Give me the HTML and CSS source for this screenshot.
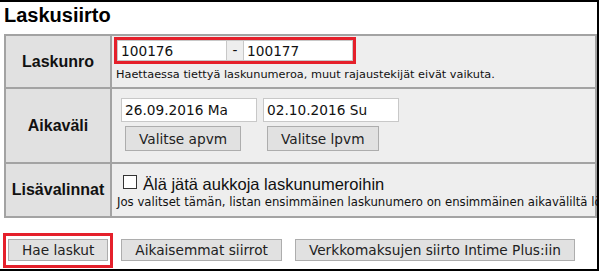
FILE: index.html
```html
<!DOCTYPE html>
<html lang="fi">
<head>
    <meta charset="UTF-8">
    <title>Laskusiirto</title>
    <link rel="stylesheet" href="styles.css">
</head>
<body>
    <div class="frame">
        <h1 class="page-title">Laskusiirto</h1>

        <table class="search-table">
            <tr class="row-short">
                <th>Laskunro</th>
                <td class="cell-range">
                    <div class="range-box">
                        <input class="num-input" type="text" value="100176">
                        <span class="range-sep">-</span>
                        <input class="num-input" type="text" value="100177">
                    </div>
                    <div class="hint">Haettaessa tiettyä laskunumeroa, muut rajaustekijät eivät vaikuta.</div>
                </td>
            </tr>
            <tr class="row-tall">
                <th>Aikaväli</th>
                <td class="cell-dates">
                    <div class="date-row">
                        <div class="date-group">
                            <input class="date-input" type="text" value="26.09.2016 Ma">
                            <button class="btn btn-pick">Valitse apvm</button>
                        </div>
                        <div class="date-group">
                            <input class="date-input" type="text" value="02.10.2016 Su">
                            <button class="btn btn-pick">Valitse lpvm</button>
                        </div>
                    </div>
                </td>
            </tr>
            <tr class="row-short row-last">
                <th>Lisävalinnat</th>
                <td class="cell-options">
                    <label class="check-line">
                        <input class="check" type="checkbox">
                        <span>Älä jätä aukkoja laskunumeroihin</span>
                    </label>
                    <div class="hint hint-wide">Jos valitset tämän, listan ensimmäinen laskunumero on ensimmäinen aikaväliltä löytyvä lasku.</div>
                </td>
            </tr>
        </table>

        <div class="actions">
            <div class="highlight">
                <button class="btn btn-action">Hae laskut</button>
            </div>
            <button class="btn btn-action">Aikaisemmat siirrot</button>
            <button class="btn btn-action">Verkkomaksujen siirto Intime Plus:iin</button>
        </div>
    </div>
</body>
</html>
```

FILE: styles.css
```css
* {
    box-sizing: border-box;
}

body {
    margin: 0;
    background: #fff;
    font-family: "DejaVu Sans", Verdana, sans-serif;
    color: #111;
}

.frame {
    width: 599px;
    height: 271px;
    border: 2px solid #000;
    border-left: none;
    overflow: hidden;
    background: #fff;
}

.page-title {
    margin: 1px 0 7px 4px;
    font-family: "Liberation Sans", Arial, sans-serif;
    font-size: 20px;
    line-height: 24px;
    font-weight: bold;
    color: #000;
}

/* search table */
.search-table {
    margin-left: 4px;
    width: 593px;
    table-layout: fixed;
    border-collapse: separate;
    border-spacing: 0;
    border-top: 2px solid #a3a3a3;
    border-left: 2px solid #a3a3a3;
}

.search-table th,
.search-table td {
    border-right: 2px solid #a3a3a3;
    border-bottom: 2px solid #a3a3a3;
    padding: 0;
}

.search-table th {
    width: 106px;
    background: #e1e1e1;
    font-family: "Liberation Sans", Arial, sans-serif;
    font-size: 16px;
    font-weight: bold;
    color: #111;
    text-align: center;
    vertical-align: middle;
}

.search-table td {
    background: #eeeeee;
    vertical-align: top;
    overflow: visible;
}

.row-short th,
.row-short td {
    height: 53px;
}

.row-tall th,
.row-tall td {
    height: 75px;
}

.row-last th,
.row-last td {
    height: 54px;
}

.cell-range {
    padding: 1px 0 0 2px !important;
}

.range-box {
    display: inline-flex;
    border: 3px solid #e5202b;
}

.num-input {
    width: 110px;
    height: 21px;
    margin: 0;
    padding: 0 3px;
    border: 1px solid #c8c8c8;
    background: #fff;
    font-family: "DejaVu Sans", Verdana, sans-serif;
    font-size: 13.7px;
    color: #111;
}

.range-sep {
    width: 16px;
    height: 21px;
    border-top: 1px solid #c8c8c8;
    border-bottom: 1px solid #c8c8c8;
    background: #eeeeee;
    font-size: 13.7px;
    line-height: 19px;
    text-align: center;
}

.hint {
    margin: 4px 0 0 2px;
    font-size: 11.3px;
    line-height: 13px;
    white-space: nowrap;
}

/* date row */
.cell-dates {
    padding: 9px 0 0 9px !important;
}

.date-row {
    display: flex;
    gap: 6px;
}

.date-group {
    display: flex;
    flex-direction: column;
    align-items: flex-start;
}

.date-input {
    width: 136px;
    height: 24px;
    margin: 0;
    padding: 0 3px;
    border: 1px solid #c8c8c8;
    background: #fff;
    font-family: "DejaVu Sans", Verdana, sans-serif;
    font-size: 13.7px;
    color: #111;
}

.btn {
    margin: 0;
    padding: 0 13px;
    border: 1px solid #adadad;
    background: #e1e1e1;
    font-family: "DejaVu Sans", Verdana, sans-serif;
    font-size: 13.7px;
    color: #222;
    cursor: pointer;
}

.btn-pick {
    height: 25px;
    margin: 4px 0 0 4px;
}

/* options row */
.cell-options {
    padding: 11px 0 0 4px !important;
}

.check-line {
    display: flex;
    align-items: flex-start;
    font-family: "Liberation Sans", Arial, sans-serif;
    font-size: 16.5px;
    line-height: 19px;
    color: #111;
}

.check {
    appearance: none;
    width: 14px;
    height: 14px;
    margin: 0 6px 0 7px;
    border: 1px solid #333;
    background: #fff;
}

.hint-wide {
    margin: 2px 0 0 1px;
    font-size: 11.7px;
}

/* bottom buttons */
.actions {
    display: flex;
    align-items: flex-start;
    margin-top: 15px;
}

.highlight {
    margin-left: 3px;
    padding: 3px 2px 4px;
    border: 3px solid #e5202b;
}

.btn-action {
    height: 22px;
    margin-top: 6px;
}

.highlight .btn-action {
    margin-top: 0;
}

.highlight + .btn-action {
    margin-left: 8px;
}

.btn-action + .btn-action {
    margin-left: 13px;
}
```
